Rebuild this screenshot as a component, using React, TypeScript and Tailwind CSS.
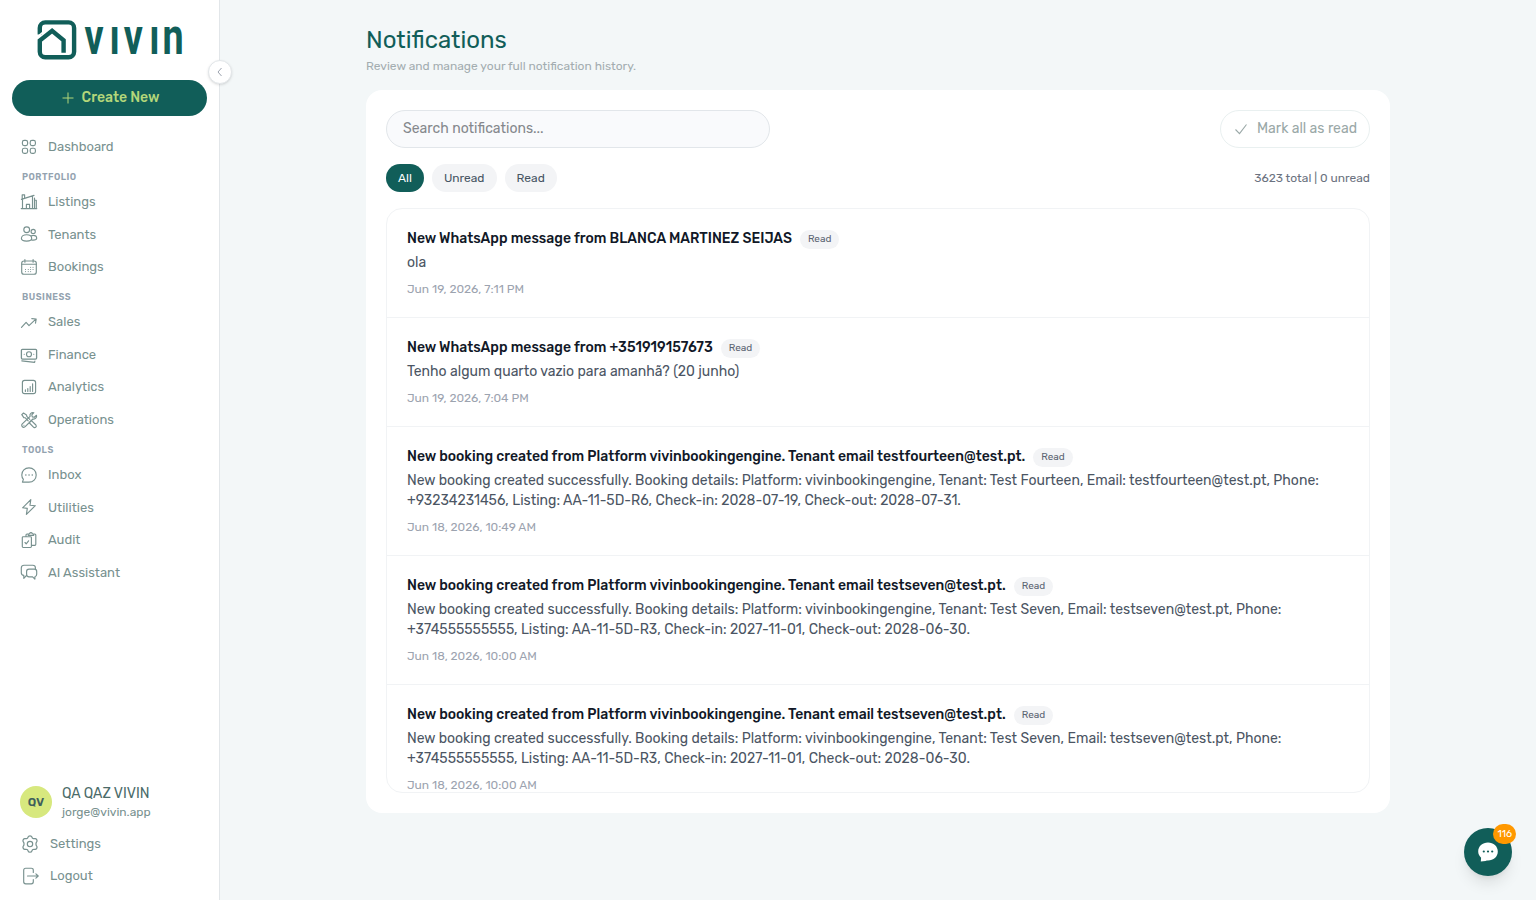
import type { ReactNode } from "react";

type IconProps = { children: ReactNode; size?: string };

function Icon({ children, size = "size-[18px]" }: IconProps) {
  return (
    <svg
      viewBox="0 0 18 18"
      className={`${size} shrink-0`}
      fill="none"
      stroke="currentColor"
      strokeWidth="1.15"
      strokeLinecap="round"
      strokeLinejoin="round"
    >
      {children}
    </svg>
  );
}

const icons = {
  dashboard: (
    <Icon>
      <rect x="2.4" y="2.4" width="5.2" height="5.2" rx="1.8" />
      <rect x="10.2" y="2.4" width="5.2" height="5.2" rx="1.8" />
      <rect x="2.4" y="10.2" width="5.2" height="5.2" rx="1.8" />
      <rect x="10.2" y="10.2" width="5.2" height="5.2" rx="1.8" />
    </Icon>
  ),
  listings: (
    <Icon>
      <path d="M1.2 15.600h15.6M2.500 15.600V6.400M1.400 6.400 14 2.400M2.200 5.800V1.800h2.400v3M12.500 15.600V3M14.500 7.200h1.800v8.400M14.500 5v10.600M6.400 15.600v-4.200h3.200v4.200" />
    </Icon>
  ),
  tenants: (
    <Icon>
      <circle cx="6.7" cy="4.7" r="2.9" />
      <circle cx="13.2" cy="6.4" r="2.1" />
      <path d="M1.4 13.6c0-2.2 2.2-3.9 5.2-3.9s5.1 1.7 5.1 3.9c0 1.800-2 2.500-5.100 2.500s-5.200-.7-5.200-2.500zM11 10.900c.6-.3 1.300-.5 2.200-.5 2.100 0 3.500 1.200 3.500 2.800 0 1.300-1.300 1.900-3.500 1.900-.7 0-1.300 0-1.800-.2" />
    </Icon>
  ),
  bookings: (
    <Icon>
      <rect x="1.700" y="3" width="14.600" height="13.200" rx="2.300" />
      <path d="M1.700 6.200h14.600M4.900 1.600v2.600M13.100 1.600v2.600" />
      <path
        strokeWidth="1"
        d="M10.600 9.400h.1M13 9.400h.1M5.500 11.500h.1M8.200 11.500h.1M10.600 11.500h.1M13 11.500h.1M5.500 13.600h.1M8.200 13.600h.1M10.600 13.600h.1"
      />
    </Icon>
  ),
  sales: (
    <Icon>
      <path d="m1.500 14.300 4.600-4.900 2.900 3.200 6.800-6.400M11.800 5.600l4.400.4-.7 4.200" />
    </Icon>
  ),
  finance: (
    <Icon>
      <rect x="1.400" y="3.300" width="15.200" height="9.800" rx="1" strokeWidth="1.300" />
      <circle cx="9" cy="8.200" r="2.500" />
      <path d="M4.200 8.200h.1M13.700 8.200h.1M1.800 14.900l12.800 1.500.3-1.400" />
    </Icon>
  ),
  analytics: (
    <Icon>
      <rect x="2.400" y="2.400" width="13.200" height="13.200" rx="2.200" />
      <path d="M5.400 11.900v1.500M7.800 10.500v2.900M10.200 8.500v4.900M12.600 5.800v7.600" />
    </Icon>
  ),
  operations: (
    <Icon>
      <path d="M1.800 3.600 3.500 2l3 1.900.3 1.500 3 3M1.800 3.600l2 3 1.500.2 2.900 3M10.500 10.200l.9-.5 4.500 4.300a1.600 1.600 0 0 1-2.200 2.300L9.400 12l.4-1" />
      <path d="M13.800 1.700c-2.400-.6-4.400 1.400-3.700 3.600l-7.800 7.600a2 2 0 0 0 2.900 2.800l7.700-7.700c2.300.6 4.200-1.500 3.600-3.700l-2.200 2-2-.4-.5-2zM3.900 14.200h.1" />
    </Icon>
  ),
  inbox: (
    <Icon>
      <path d="M9 1.900c4.200 0 7.200 3 7.200 7 0 4.100-3 7.200-7.200 7.200H2.400l1-2.700C2.400 12.200 1.800 10.600 1.800 8.900c0-4 3-7 7.200-7z" />
      <path strokeWidth="1.500" d="M5.800 9h.1M9 9h.1M12.200 9h.1" />
    </Icon>
  ),
  utilities: (
    <Icon>
      <path d="M10.500 1.700 2.300 9.900l4.700.6-.9 6 8.900-8.700-5.300-.5z" transform="translate(.3 -.1)" />
    </Icon>
  ),
  audit: (
    <Icon>
      <path d="M3.200 5.700h7.300a.9.900 0 0 1 .9.900v9a.9.900 0 0 1-.9.900H3.200a.9.900 0 0 1-.9-.9v-9a.9.900 0 0 1 .9-.9z" />
      <path d="M6 5.500V4a1 1 0 0 1 1-1h1M13.800 3h1a1 1 0 0 1 1 1v9.300a1 1 0 0 1-1 1h-3M8.200 4.300V3l1.300-.3c.6-1.500 2.300-1.500 2.900 0l1.300.3v1.300zM5 11.500l1.200 1.300 2.400-3" />
    </Icon>
  ),
  assistant: (
    <Icon>
      <path d="M15.400 5.900V4.800c0-1.400-1-2.600-2.600-2.600H4c-1.500 0-2.700 1.200-2.700 2.800v4.700c0 1.500 1 2.600 2.500 2.700v2.900l2.700-2.800" />
      <path d="M9 6.100h5.400c1.300 0 2.300.9 2.300 2.300v2.900c0 1.300-.7 2.200-1.800 2.400v2.400l-2.300-2.300H9c-1.400 0-2.400-.9-2.400-2.500V8.400c0-1.300 1-2.300 2.400-2.300z" />
    </Icon>
  ),
  settings: (
    <Icon>
      <circle cx="9" cy="9" r="2.700" />
      <path
        transform="translate(-.72 -.72) scale(1.080)"
        d="M7.300 2.400c.3-1.300 3.100-1.300 3.400 0 .3 1.300 1.500 2 2.800 1.600 1.300-.4 2.700 2 1.700 3-.9.900-.9 3.100 0 4 1 1-.4 3.400-1.700 3-1.300-.4-2.500.3-2.800 1.600-.3 1.300-3.100 1.300-3.400 0-.3-1.300-1.500-2-2.800-1.600-1.300.4-2.700-2-1.700-3 .9-.9.900-3.100 0-4-1-1 .4-3.400 1.700-3 1.300.4 2.500-.3 2.800-1.600z"
      />
    </Icon>
  ),
  logout: (
    <Icon>
      <path d="M12.300 5.400V3.200c0-1.200-.8-2-2-2H4.700c-1.200 0-2 .8-2 2v11.600c0 1.200.8 2 2 2h5.600c1.200 0 2-.8 2-2v-2.200M6.500 9h10.700M14.900 6.800 17.200 9l-2.300 2.200" />
    </Icon>
  ),
};

type NavEntry = { label: string; icon: ReactNode };

const sections: { title?: string; items: NavEntry[] }[] = [
  { items: [{ label: "Dashboard", icon: icons.dashboard }] },
  {
    title: "PORTFOLIO",
    items: [
      { label: "Listings", icon: icons.listings },
      { label: "Tenants", icon: icons.tenants },
      { label: "Bookings", icon: icons.bookings },
    ],
  },
  {
    title: "BUSINESS",
    items: [
      { label: "Sales", icon: icons.sales },
      { label: "Finance", icon: icons.finance },
      { label: "Analytics", icon: icons.analytics },
      { label: "Operations", icon: icons.operations },
    ],
  },
  {
    title: "TOOLS",
    items: [
      { label: "Inbox", icon: icons.inbox },
      { label: "Utilities", icon: icons.utilities },
      { label: "Audit", icon: icons.audit },
      { label: "AI Assistant", icon: icons.assistant },
    ],
  },
];

const sevenBody =
  "New booking created successfully. Booking details: Platform: vivinbookingengine, Tenant: Test Seven, Email: testseven@test.pt, Phone: +374555555555, Listing: AA-11-5D-R3, Check-in: 2027-11-01, Check-out: 2028-06-30.";

const notifications = [
  { title: "New WhatsApp message from BLANCA MARTINEZ SEIJAS", body: "ola", date: "Jun 19, 2026, 7:11 PM" },
  {
    title: "New WhatsApp message from +351919157673",
    body: "Tenho algum quarto vazio para amanhã? (20 junho)",
    date: "Jun 19, 2026, 7:04 PM",
  },
  {
    title: "New booking created from Platform vivinbookingengine. Tenant email testfourteen@test.pt.",
    body: "New booking created successfully. Booking details: Platform: vivinbookingengine, Tenant: Test Fourteen, Email: testfourteen@test.pt, Phone: +93234231456, Listing: AA-11-5D-R6, Check-in: 2028-07-19, Check-out: 2028-07-31.",
    date: "Jun 18, 2026, 10:49 AM",
  },
  {
    title: "New booking created from Platform vivinbookingengine. Tenant email testseven@test.pt.",
    body: sevenBody,
    date: "Jun 18, 2026, 10:00 AM",
  },
  {
    title: "New booking created from Platform vivinbookingengine. Tenant email testseven@test.pt.",
    body: sevenBody,
    date: "Jun 18, 2026, 10:00 AM",
  },
];

function Logo() {
  return (
    <svg viewBox="0 0 148 42" className="h-[42px] w-[148px] overflow-visible" aria-label="vivin">
      <g fill="none" stroke="#115e59" strokeWidth="4.400">
        <path d="M3.800 15.500V8.900a5.500 5.500 0 0 1 5.500-5.500h23.300a5.500 5.500 0 0 1 5.500 5.500v23.900a5.500 5.500 0 0 1-5.500 5.500H9.300A5.500 5.500 0 0 1 3.800 32.800V21.500L16.100 11.800 27.600 21.200V33.700" />
      </g>
      <path d="M.6 18.700 6.800 13.300" stroke="#fff" strokeWidth="1.700" />
      <text
        transform="scale(.74 1)"
        x="65.500 99.500 118.500 153 171"
        y="35.200"
        fontSize="51"
        fontWeight="700"
        fill="#115e59"
        fontFamily="Roboto, sans-serif"
      >
        vıvın
      </text>
    </svg>
  );
}

function Sidebar() {
  return (
    <aside className="relative flex h-full w-[220px] shrink-0 flex-col border-r border-[#e2e6e9] bg-white">
      <div className="flex h-20 justify-center pt-[19px]">
        <Logo />
      </div>
      <button className="mx-3 flex h-9 items-center justify-center gap-2 rounded-full bg-[#115e59] pl-0.5 text-sm leading-5 font-medium text-[#b4d77a]">
        <svg viewBox="0 0 12 12" className="size-3" stroke="currentColor" strokeWidth="1">
          <path d="M6 .5v11M.5 6h11" />
        </svg>
        <span className="pb-px">Create New</span>
      </button>
      <nav className="mt-[14.25px] flex-1 px-5">
        {sections.map((section, i) => (
          <div key={i}>
            {section.title && (
              <div className="h-[22.75px] pt-[6px] pl-0.5 text-[9px] leading-[16.75px] font-semibold tracking-[0.5px] text-[#94a3b0]">
                {section.title}
              </div>
            )}
            {section.items.map((item) => (
              <a key={item.label} className="flex h-[32.5px] items-center gap-2.5 text-[13px] text-[#78918f]">
                {item.icon}
                <span>{item.label}</span>
              </a>
            ))}
          </div>
        ))}
      </nav>
      <div className="px-5 pb-2">
        <div className="mb-[7px] flex items-center gap-2.5">
          <div className="flex size-8 items-center justify-center rounded-full bg-[#d7e87e] text-xs font-semibold text-[#3f5f5c]">
            QV
          </div>
          <div className="pt-0.5">
            <div className="text-sm leading-[18px] text-[#4b6b69]">QA QAZ VIVIN</div>
            <div className="text-xs leading-[18px] text-[#78918f]">jorge@vivin.app</div>
          </div>
        </div>
        <a className="flex h-8 items-center gap-[11px] text-[13px] text-[#78918f]">
          <span className="ml-px">{icons.settings}</span>
          <span>Settings</span>
        </a>
        <a className="flex h-8 items-center gap-[11px] text-[13px] text-[#78918f]">
          <span className="ml-px">{icons.logout}</span>
          <span>Logout</span>
        </a>
      </div>
      <button className="absolute top-[60px] -right-[13px] flex size-6 items-center justify-center rounded-full border border-[#e2e6e9] bg-white shadow-sm">
        <svg viewBox="0 0 10 10" className="size-2.5" fill="none" stroke="#9ca3af" strokeWidth="1">
          <path d="M6.500 1 3 5l3.500 4" />
        </svg>
      </button>
    </aside>
  );
}

export default function App() {
  return (
    <div className="flex h-[900px] w-full overflow-hidden bg-[#f3f7f8] font-['Rubik','Roboto',sans-serif]">
      <Sidebar />
      <main className="flex flex-1 justify-center">
        <div className="w-[1024px] pt-6">
          <h1 className="text-2xl leading-8 text-[#115e59]">Notifications</h1>
          <p className="mt-0.5 text-xs leading-4 text-[#a3adb0]">Review and manage your full notification history.</p>
          <section className="mt-4 flex h-[723px] flex-col rounded-2xl bg-white p-5">
            <div className="flex items-center justify-between">
              <div className="flex h-[38px] w-96 items-center rounded-full border border-[#e2e6ea] bg-[#f9fafc] px-4 text-sm leading-5 text-[#85888c]">
                Search notifications...
              </div>
              <button className="flex h-[38px] items-center gap-2 rounded-full border border-[#e9f0f0] px-3 text-sm leading-5 text-[#9aa8a7]">
                <svg viewBox="0 0 16 16" className="size-4" fill="none" stroke="currentColor" strokeWidth="1.100">
                  <path d="m2.500 8.500 4 4.200L13.500 3.500" />
                </svg>
                Mark all as read
              </button>
            </div>
            <div className="mt-4 flex items-center justify-between text-xs">
              <div className="flex gap-2 text-[#475563]">
                <span className="flex h-7 items-center rounded-full bg-[#115e59] px-3 text-white">All</span>
                <span className="flex h-7 items-center rounded-full bg-[#f3f4f6] px-3">Unread</span>
                <span className="flex h-7 items-center rounded-full bg-[#f3f4f6] px-3">Read</span>
              </div>
              <span className="text-[#6b7280]">3623 total | 0 unread</span>
            </div>
            <div className="mt-4 min-h-0 flex-1 overflow-hidden rounded-2xl border border-[#f1f3f5]">
              {notifications.map((n, i) => (
                <article key={i} className="border-b border-[#f1f3f5] p-5">
                  <div className="flex h-5 items-center gap-2">
                    <h2 className="text-sm leading-5 font-medium text-[#111827]">{n.title}</h2>
                    <span className="mt-px flex h-[19px] items-center rounded-full bg-[#f3f4f6] px-2 text-[10px] leading-[15px] text-[#5b6472]">
                      Read
                    </span>
                  </div>
                  <p className="mt-1 text-sm leading-5 text-[#4b5563]">{n.body}</p>
                  <p className="mt-2 text-xs leading-4 text-[#9ca3af]">{n.date}</p>
                </article>
              ))}
            </div>
          </section>
        </div>
      </main>
      <button className="absolute top-[828px] right-6 flex size-12 items-center justify-center rounded-full bg-[#115e59] shadow-lg">
        <svg viewBox="0 0 20 20" className="size-5">
          <path d="M10 .5c5.500 0 9.800 3.800 9.800 9s-4.300 9-9.800 9c-.9 0-1.500 0-2.500.5l-4.700.5.300-3.800C1.200 13.900.2 12 .2 9.500c0-5.200 4.300-9 9.800-9z" fill="#fff" />
          <g fill="#115e59">
            <circle cx="5.800" cy="9.500" r="1.100" />
            <circle cx="10" cy="9.500" r="1.100" />
            <circle cx="14.200" cy="9.500" r="1.100" />
          </g>
        </svg>
        <span className="absolute -top-1 -right-1 flex h-5 items-center rounded-full bg-[#ff9800] px-1 text-[10px] text-white">
          116
        </span>
      </button>
    </div>
  );
}
